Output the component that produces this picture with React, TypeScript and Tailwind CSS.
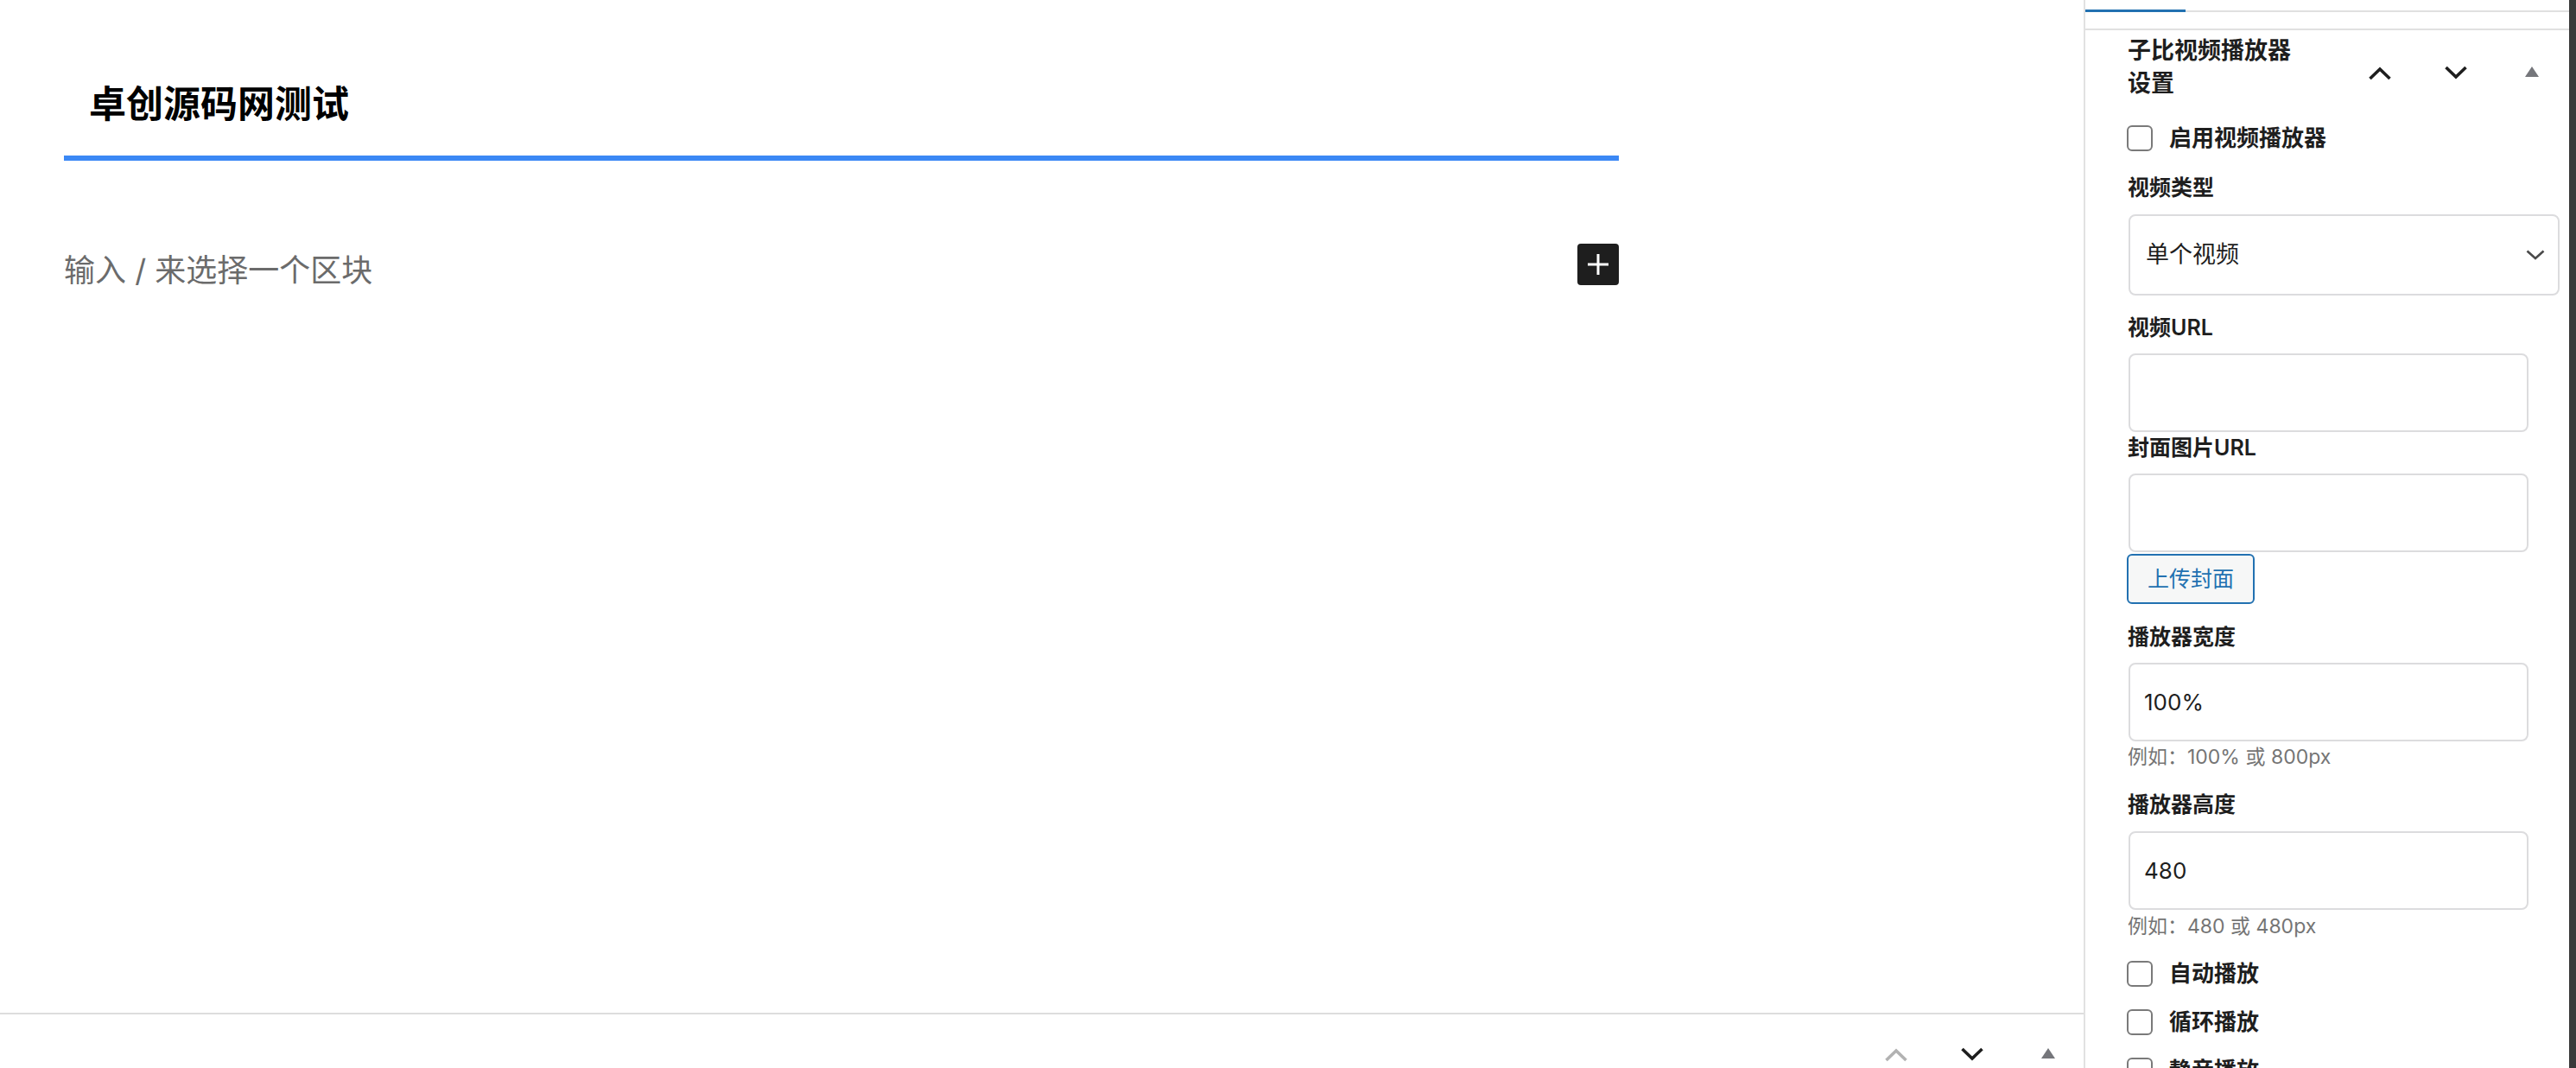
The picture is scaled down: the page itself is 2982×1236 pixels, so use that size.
import React from 'react';

function Chevron({ dir, color }: { dir: 'up' | 'down'; color: string }) {
  return (
    <svg width="28" height="17" viewBox="0 0 28 17" fill="none">
      <path
        d={dir === 'up' ? 'M2.5 15L14 4L25.5 15' : 'M2.5 2L14 13L25.5 2'}
        stroke={color}
        strokeWidth="3.6"
      />
    </svg>
  );
}

function Triangle() {
  return (
    <svg width="16" height="12" viewBox="0 0 16 12">
      <path d="M8 0L16 12H0Z" fill="#75767b" />
    </svg>
  );
}

function PanelControls({ upColor }: { upColor: string }) {
  return (
    <div className="flex gap-[6px]">
      <button className="flex h-[28px] w-[82px] items-center justify-center">
        <Chevron dir="up" color={upColor} />
      </button>
      <button className="flex h-[28px] w-[82px] items-center justify-center">
        <Chevron dir="down" color="#1e1e1e" />
      </button>
      <button className="flex h-[28px] w-[82px] items-center justify-center pb-[3px]">
        <Triangle />
      </button>
    </div>
  );
}

function Checkbox({ label, className }: { label: string; className?: string }) {
  return (
    <label className={`flex h-[30px] items-center ${className ?? ''}`}>
      <span className="ml-[-1px] h-[30px] w-[30px] rounded-[6px] border-2 border-[#7a7a7a] bg-white" />
      <span className="ml-[19px] text-[26px] font-semibold leading-[30px] text-[#1e1e1e]">{label}</span>
    </label>
  );
}

function FieldLabel({ children, className }: { children: React.ReactNode; className?: string }) {
  return <p className={`text-[25px] font-semibold leading-[32px] text-[#1e1e1e] ${className ?? ''}`}>{children}</p>;
}

function TextInput({ value, className }: { value?: string; className?: string }) {
  return (
    <input
      readOnly
      value={value ?? ''}
      className={`ml-[1px] block h-[91px] w-[463px] rounded-[8px] border-2 border-[#dcdcde] bg-white pl-[16px] text-[26px] text-[#1e1e1e] outline-none ${className ?? ''}`}
    />
  );
}

function Help({ children, className }: { children: React.ReactNode; className?: string }) {
  return <p className={`text-[23px] leading-[28px] text-[#757575] ${className ?? ''}`}>{children}</p>;
}

export default function App() {
  return (
    <div className="flex h-[1236px] w-[2982px] overflow-hidden bg-white font-[family-name:Inter,'Noto_Sans_CJK_SC',sans-serif] text-[#1e1e1e]">
      <main className="flex w-[2412px] shrink-0 flex-col">
        <div className="h-[1172px] shrink-0 pl-[74px] pt-[90px]">
          <div className="w-[1800px]">
            <h1 className="pl-[29px] text-[43px] font-bold leading-[60px] text-black">卓创源码网测试</h1>
            <div className="mt-[30px] h-[6px] bg-[#3b88f5]" />
            <div className="mt-[96px] flex h-[48px] items-start justify-between">
              <p className="mt-[7px] text-[36px] leading-[48px] text-[#6b6b6b]">输入 / 来选择一个区块</p>
              <button className="flex h-[48px] w-[48px] items-center justify-center rounded-[4px] bg-[#1e1e1e]">
                <svg width="48" height="48" viewBox="0 0 24 24">
                  <path d="M11.25 12.75V18h1.5v-5.25H18v-1.5h-5.25V6h-1.5v5.25H6v1.5h5.25Z" fill="#ffffff" />
                </svg>
              </button>
            </div>
          </div>
        </div>
        <div className="flex flex-1 justify-end border-t-2 border-[#dddddd] pt-[32px]">
          <PanelControls upColor="#b2b2b2" />
        </div>
      </main>

      <aside className="flex w-[570px] shrink-0 border-l-2 border-[#e2e2e2]">
        <div className="flex-1 overflow-hidden">
          <div className="h-[35px] border-b-2 border-[#e0e0e0]">
            <div className="flex h-[14px] items-end border-b-2 border-[#e0e0e0]">
              <div className="mb-[-2px] h-[3px] w-[116px] bg-[#2271b1]" />
            </div>
          </div>

          <div className="flex items-start justify-between pr-[2px]">
            <h2 className="ml-[49px] mt-[5px] w-[205px] text-[27px] font-semibold leading-[38px] text-[#1e1e1e]">
              子比视频播放器设置
            </h2>
            <div className="mt-[35px]">
              <PanelControls upColor="#1e1e1e" />
            </div>
          </div>

          <div className="flex flex-col pl-[49px]">
            <Checkbox label="启用视频播放器" className="mt-[29px]" />

            <FieldLabel className="mt-[26px]">视频类型</FieldLabel>
            <div className="ml-[1px] mt-[15px] flex h-[94px] w-[499px] items-center justify-between rounded-[8px] border-2 border-[#dcdcde] pl-[18px] pr-[15px]">
              <span className="text-[27px] leading-[36px]">单个视频</span>
              <svg width="22" height="12" viewBox="0 0 22 12" fill="none">
                <path d="M1.5 1.5L11 10L20.5 1.5" stroke="#4a4a4a" strokeWidth="2.6" />
              </svg>
            </div>

            <FieldLabel className="mt-[21px]">视频URL</FieldLabel>
            <TextInput className="mt-[14px]" />

            <FieldLabel className="mt-[2px]">封面图片URL</FieldLabel>
            <TextInput className="mt-[14px]" />

            <button className="ml-[-1px] mt-[2px] h-[58px] w-[148px] rounded-[6px] border-2 border-[#2271b1] bg-[#f6f7f7] text-[25px] leading-[30px] text-[#2271b1]">
              上传封面
            </button>

            <FieldLabel className="mt-[22px]">播放器宽度</FieldLabel>
            <TextInput value="100%" className="mt-[14px]" />
            <Help className="mt-[4px]">例如：100% 或 800px</Help>

            <FieldLabel className="mt-[25px]">播放器高度</FieldLabel>
            <TextInput value="480" className="mt-[15px]" />
            <Help className="mt-[5px]">例如：480 或 480px</Help>

            <Checkbox label="自动播放" className="mt-[26px]" />
            <Checkbox label="循环播放" className="mt-[26px]" />
            <Checkbox label="静音播放" className="mt-[26px]" />
          </div>
        </div>
        <div className="w-[8px] shrink-0 bg-[#3a3a3a]" />
      </aside>
    </div>
  );
}
